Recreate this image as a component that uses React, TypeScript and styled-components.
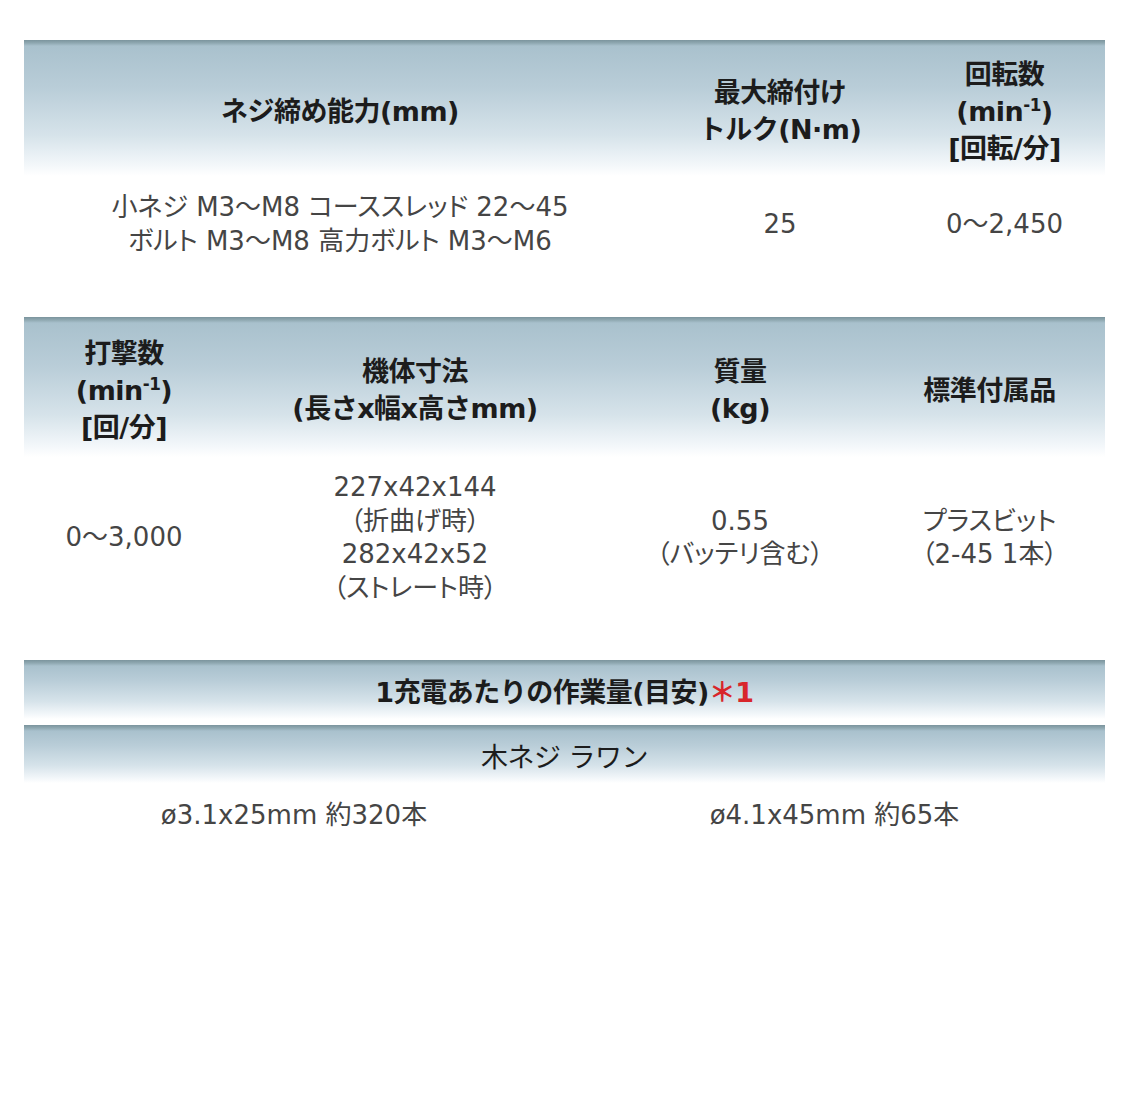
import React from 'react';
import styled, { createGlobalStyle } from 'styled-components';

const GlobalStyle = createGlobalStyle`
  body {
    margin: 0;
    background: #fff;
    font-family: 'Noto Sans CJK JP', 'Noto Sans', sans-serif;
  }
`;

const Page = styled.div`
  width: 1125px;
  height: 1118px;
  padding: 40px 20px 0 24px;
  box-sizing: border-box;
  background: #fff;
`;

const Table = styled.div<{ $mt?: number }>`
  width: 1081px;
  margin-top: ${p => p.$mt || 0}px;
`;

const HeaderRow = styled.div<{ $cols: string; $h: number }>`
  display: grid;
  grid-template-columns: ${p => p.$cols};
  height: ${p => p.$h}px;
  background: linear-gradient(
    to bottom,
    #7b949d 0px,
    #8fa8b1 3px,
    #a9c1cd 6px,
    #b9cdd8 35%,
    #d6e3ea 70%,
    #f3f7fa 92%,
    #ffffff 100%
  );
`;

const HeadCell = styled.div<{ $light?: boolean }>`
  display: flex;
  flex-direction: column;
  align-items: center;
  justify-content: center;
  padding-top: 6px;
  text-align: center;
  font-family: 'DejaVu Sans', 'Noto Sans CJK JP', sans-serif;
  font-size: 27px;
  line-height: 37px;
  font-weight: ${p => (p.$light ? 400 : 700)};
  color: #1c1c1c;
  letter-spacing: -0.5px;
  white-space: nowrap;
`;

const DataRow = styled.div<{ $cols: string; $pt: number }>`
  display: grid;
  grid-template-columns: ${p => p.$cols};
  padding-top: ${p => p.$pt}px;
`;

const DataCell = styled.div`
  display: flex;
  flex-direction: column;
  align-items: center;
  justify-content: center;
  text-align: center;
  font-family: 'DejaVu Sans', 'Noto Sans CJK JP', sans-serif;
  font-size: 26px;
  line-height: 33.5px;
  color: #454545;
  font-feature-settings: 'palt';
  white-space: nowrap;
`;

const Red = styled.span`
  color: #d8262b;
`;

const Sup = styled.sup`
  font-size: 0.62em;
  line-height: 0;
`;

const Gap = styled.div`
  height: 6px;
`;

const cols1 = '632px 248px 201px';
const cols2 = '200px 382px 268px 231px';
const cols3 = '540px 541px';

const Min = () => (
  <span>
    (min<Sup>-1</Sup>)
  </span>
);

export default function App() {
  return (
    <Page>
      <GlobalStyle />
      <Table>
        <HeaderRow $cols={cols1} $h={136}>
          <HeadCell>ネジ締め能力(mm)</HeadCell>
          <HeadCell>
            <span>最大締付け</span>
            <span>トルク(N·m)</span>
          </HeadCell>
          <HeadCell>
            <span>回転数</span>
            <Min />
            <span>[回転/分]</span>
          </HeadCell>
        </HeaderRow>
        <DataRow $cols={cols1} $pt={15}>
          <DataCell>
            <span>小ネジ M3～M8 コーススレッド 22～45</span>
            <span>ボルト M3～M8 高力ボルト M3～M6</span>
          </DataCell>
          <DataCell>25</DataCell>
          <DataCell>0～2,450</DataCell>
        </DataRow>
      </Table>

      <Table $mt={59}>
        <HeaderRow $cols={cols2} $h={140}>
          <HeadCell>
            <span>打撃数</span>
            <Min />
            <span>[回/分]</span>
          </HeadCell>
          <HeadCell>
            <span>機体寸法</span>
            <span>(長さx幅x高さmm)</span>
          </HeadCell>
          <HeadCell>
            <span>質量</span>
            <span>(kg)</span>
          </HeadCell>
          <HeadCell>標準付属品</HeadCell>
        </HeaderRow>
        <DataRow $cols={cols2} $pt={14}>
          <DataCell>0～3,000</DataCell>
          <DataCell>
            <span>227x42x144</span>
            <span>（折曲げ時）</span>
            <span>282x42x52</span>
            <span>（ストレート時）</span>
          </DataCell>
          <DataCell>
            <span>0.55</span>
            <span>（バッテリ含む）</span>
          </DataCell>
          <DataCell>
            <span>プラスビット</span>
            <span>（2-45 1本）</span>
          </DataCell>
        </DataRow>
      </Table>

      <Table $mt={55}>
        <HeaderRow $cols="1fr" $h={59}>
          <HeadCell>
            <span>
              1充電あたりの作業量(目安)<Red>＊1</Red>
            </span>
          </HeadCell>
        </HeaderRow>
        <Gap />
        <HeaderRow $cols="1fr" $h={58}>
          <HeadCell $light>木ネジ ラワン</HeadCell>
        </HeaderRow>
        <DataRow $cols={cols3} $pt={16}>
          <DataCell>ø3.1x25mm 約320本</DataCell>
          <DataCell>ø4.1x45mm 約65本</DataCell>
        </DataRow>
      </Table>
    </Page>
  );
}
